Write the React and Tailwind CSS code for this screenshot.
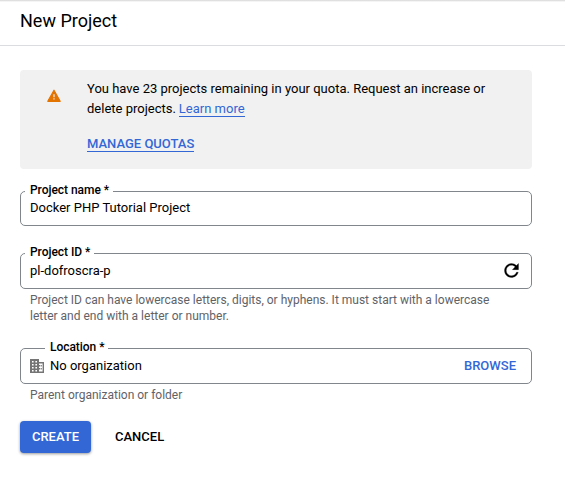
import React from "react";

function WarningIcon() {
  return (
    <svg viewBox="0 0 15 14" className="h-[14px] w-[15px] shrink-0">
      <path d="M7 1.2 13.2 12.3H.8z" fill="#e37400" stroke="#e37400" strokeWidth="1.2" strokeLinejoin="round" />
      <path d="M6.4 5.2h1.2v3H6.4zM6.4 9.2h1.2v1.2H6.4z" fill="#f1f1f1" />
    </svg>
  );
}

function RefreshIcon() {
  return (
    <svg viewBox="0 0 24 24" className="h-[21px] w-[21px] fill-black">
      <path
        stroke="black"
        strokeWidth="0.3"
        d="M17.65 6.35C16.2 4.9 14.21 4 12 4c-4.42 0-7.99 3.58-7.99 8s3.57 8 7.99 8c3.73 0 6.84-2.55 7.73-6h-2.08c-.82 2.33-3.04 4-5.65 4-3.31 0-6-2.69-6-6s2.69-6 6-6c1.66 0 3.14.69 4.22 1.78L13 11h7V4l-2.35 2.35z"
      />
    </svg>
  );
}

function OrganizationIcon() {
  return (
    <svg viewBox="0 0 14 14" className="h-[14px] w-[14px] fill-[#757575]">
      <path
        fillRule="evenodd"
        d="M0 0h9v3h5v11H0zM2 2v1.4h1.6V2zM5.4 2v1.4H7V2zM2 5v1.6h1.6V5zM5.4 5v1.6H7V5zM2 8v1.6h1.6V8zM5.4 8v1.6H7V8zM2 11v1.4h1.6V11zM5.4 11v1.4H7V11zM9 4.4V6h1v1.4H9V9h1v1.4H9v2h3.6v-8z"
      />
      <path d="M10.6 6h1.2v1.4h-1.2zM10.6 9h1.2v1.4h-1.2z" />
    </svg>
  );
}

function Field({ label, labelClass = "ml-1", className = "h-9", rowClass = "", children }) {
  return (
    <div className={`rounded-[5px] border border-[#80868b] ${className}`}>
      <div
        className={`-mt-[10px] h-4 w-fit bg-white pr-1 pl-[5px] text-[12px] leading-4 font-medium tracking-[-0.04px] ${labelClass}`}
      >
        {label} *
      </div>
      <div className={`flex h-5 items-center pr-[14px] pl-[9px] text-[13px] leading-5 ${rowClass}`}>{children}</div>
    </div>
  );
}

export default function App() {
  return (
    <div className="h-[479px] w-[565px] overflow-hidden bg-white font-['Roboto',sans-serif] text-black">
      <header className="h-[46px] border-b border-[#dadce0] bg-linear-to-b from-[#d5d5d5] to-white to-[2px] pt-[9px] pl-5 text-[18px] leading-6">
        New Project
      </header>
      <main className="ml-5 w-[512px] pt-6">
        <section className="flex h-[99px] rounded bg-[#f1f1f1] pt-[9px] pl-[27px] text-[13px] leading-5">
          <div className="pt-[10px]">
            <WarningIcon />
          </div>
          <div className="ml-[25px]">
            <p>You have 23 projects remaining in your quota. Request an increase or</p>
            <p className="flex gap-[3px]">
              <span>delete projects.</span>
              <a className="h-[18px] border-b border-[#3367d6] text-[#3367d6]">Learn more</a>
            </p>
            <a className="mt-[15px] block h-[18px] w-fit border-b border-[#3367d6] leading-5 font-medium text-[#3367d6]">
              MANAGE QUOTAS
            </a>
          </div>
        </section>
        <Field label="Project name" className="mt-[22px] h-[35px]">
          Docker PHP Tutorial Project
        </Field>
        <Field label="Project ID" className="mt-[27px] h-9" rowClass="pt-px">
          <span className="flex-1">pl-dofroscra-p</span>
          <span className="-mr-[5px]">
            <RefreshIcon />
          </span>
        </Field>
        <p className="mt-[3px] w-[490px] pl-[10px] text-[12px] leading-4 text-[#5f6368]">
          Project ID can have lowercase letters, digits, or hyphens. It must start with a lowercase letter and end with
          a letter or number.
        </p>
        <Field label="Location" labelClass="ml-6" className="mt-6 h-9" rowClass="pt-px">
          <OrganizationIcon />
          <span className="ml-[6px] flex-1">No organization</span>
          <span className="mr-px font-medium text-[#3367d6]">BROWSE</span>
        </Field>
        <p className="mt-[3px] pl-[10px] text-[12px] leading-4 text-[#5f6368]">Parent organization or folder</p>
        <div className="mt-[18px] flex text-[13px] font-medium">
          <button className="h-8 w-[71px] rounded bg-[#3367d6] text-white shadow-[0_1px_3px_rgba(0,0,0,0.4)]">
            CREATE
          </button>
          <button className="ml-3 h-8 px-3">CANCEL</button>
        </div>
      </main>
    </div>
  );
}
